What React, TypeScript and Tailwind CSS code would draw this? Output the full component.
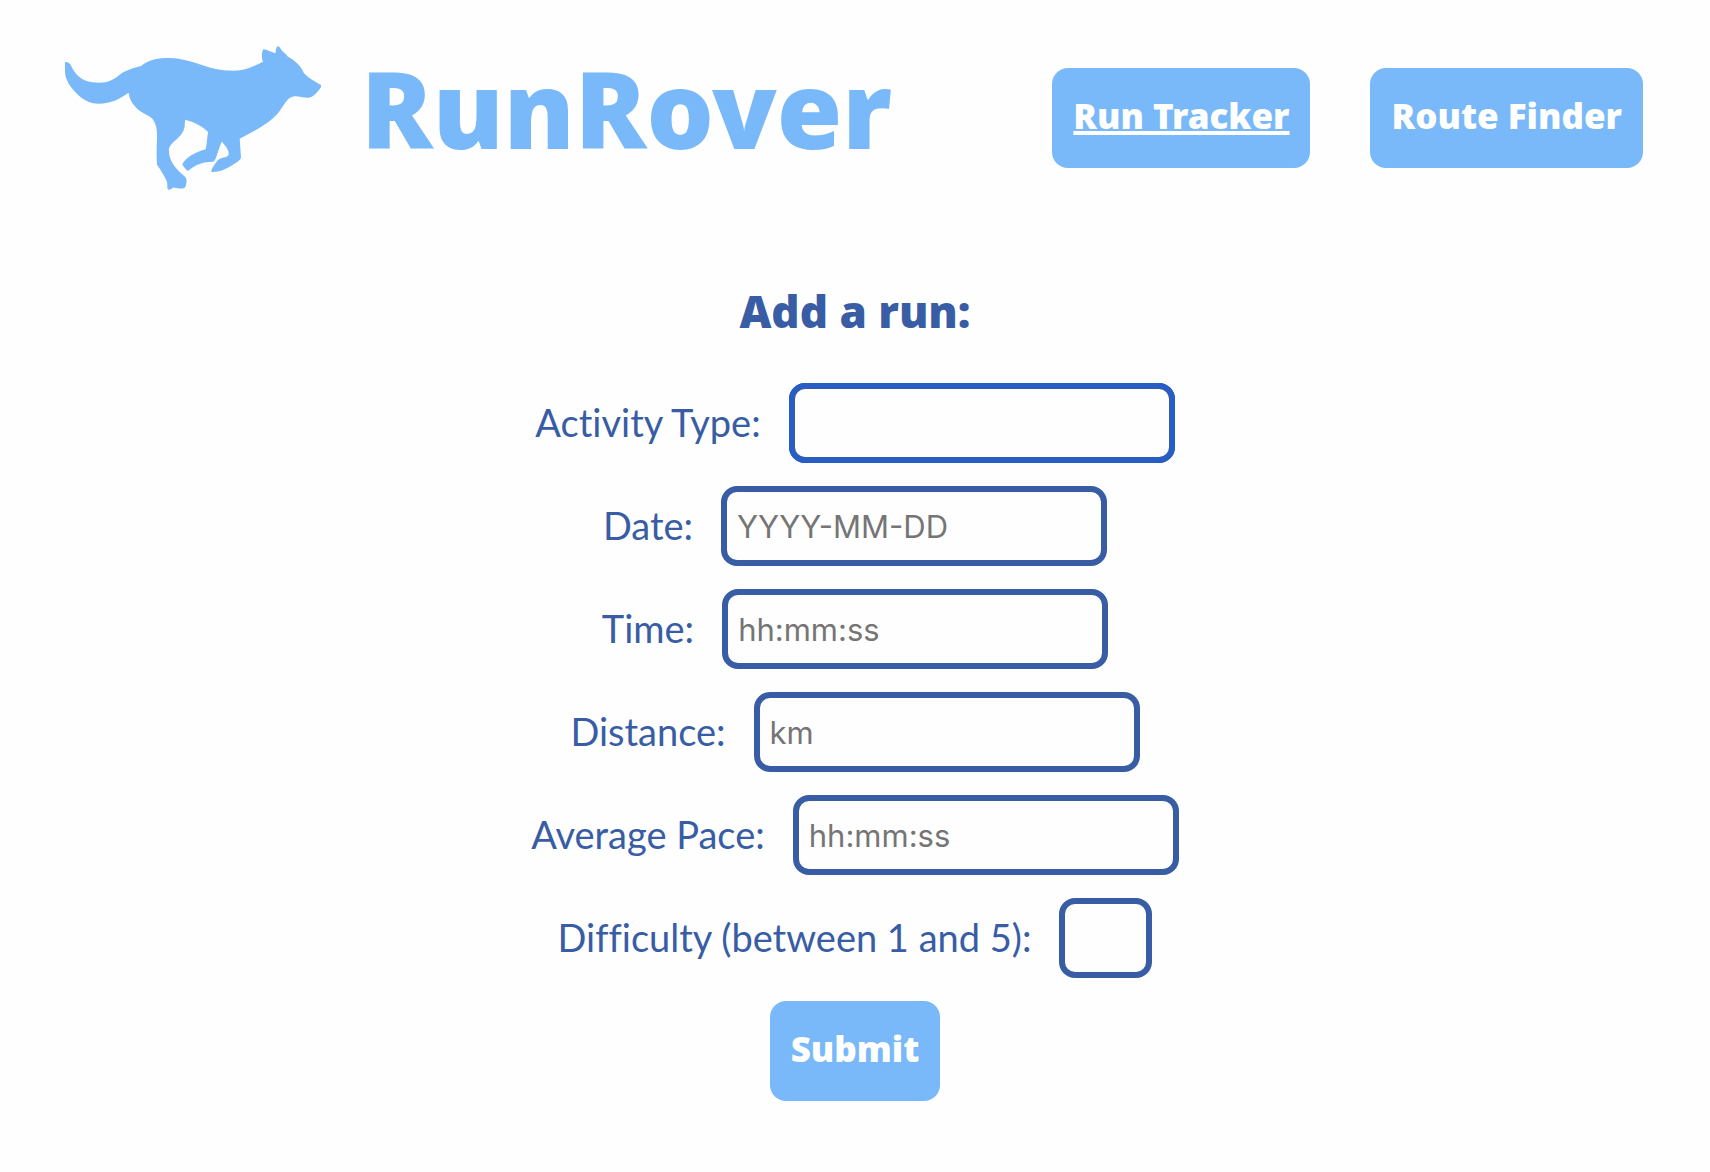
type Field = {
  id: string;
  label: string;
  placeholder?: string;
  small?: boolean;
  active?: boolean;
};

const fields: Field[] = [
  { id: "activity", label: "Activity Type:", active: true },
  { id: "date", label: "Date:", placeholder: "YYYY-MM-DD" },
  { id: "time", label: "Time:", placeholder: "hh:mm:ss" },
  { id: "distance", label: "Distance:", placeholder: "km" },
  { id: "pace", label: "Average Pace:", placeholder: "hh:mm:ss" },
  { id: "difficulty", label: "Difficulty (between 1 and 5):", small: true },
];

function DogLogo() {
  return (
    <svg viewBox="45 45 768 438" className="h-[146px] w-64 shrink-0" fill="#79b9f9" role="img" aria-label="Running dog">
      <path d="M45 97 C51 94 57 98 62 105 C78 139 98 158 145 158 C176 158 192 148 209 134 C231 118 250 115 273 108 C298 88 325 84 358 84 C398 85 430 96 467 109 C500 120 525 122 550 122 C588 122 608 110 639 95 C634 84 634 70 640 58 C652 59 664 67 677 70 C677 62 678 53 683 48 C689 49 692 57 696 62 C703 68 709 73 714 80 C736 91 755 110 762 130 C776 145 795 155 813 165 L813 171 C803 187 790 201 776 203 C760 204 747 198 733 199 C711 202 703 225 689 243 C660 281 616 301 569 326 L573 382 C571 392 562 396 552 402 C530 416 509 427 484 426 C483 418 489 411 495 402 C502 392 506 387 513 385 C521 382 529 382 534 377 C539 370 534 360 529 352 C525 345 519 339 515 335 C509 348 506 361 501 374 C498 383 495 394 488 395 C472 395 455 398 439 406 C428 411 420 419 413 423 C406 417 401 411 397 403 C406 384 433 367 467 358 C471 341 471 325 474 306 C456 287 432 276 406 269 C403 279 406 288 401 301 C391 325 366 334 357 355 C354 388 374 415 402 437 C409 443 411 449 409 459 C408 470 405 474 401 475 C391 477 381 473 373 473 C368 470 366 480 357 479 C350 480 353 468 351 456 C344 438 332 420 321 404 C319 375 320 350 321 323 C322 298 318 275 302 262 C286 251 268 246 254 228 C243 216 238 203 236 188 C212 205 184 221 145 221 C103 220 80 192 60 167 C48 148 45 136 45 120 Z" />
    </svg>
  );
}

const buttonClass =
  "flex h-[100px] items-center justify-center rounded-2xl bg-[#79b9f9] px-[21px] pb-[6px] text-[35px] leading-none font-black whitespace-nowrap text-white font-['Noto_Sans',sans-serif]";

export default function App() {
  return (
    <div className="min-h-screen bg-[#fefefe] pb-16 text-[#385da5]">
      <header className="flex items-center justify-between pt-[45px] pr-[67px] pl-[65px]">
        <div className="flex items-center gap-10">
          <DogLogo />
          <h1 className="pb-5 text-[106px] leading-none font-black text-[#79b9f9] font-['Noto_Sans',sans-serif]">
            RunRover
          </h1>
        </div>
        <nav className="flex gap-15">
          <a href="#tracker" className={buttonClass + " underline decoration-4 underline-offset-2"}>
            Run Tracker
          </a>
          <a href="#finder" className={buttonClass}>
            Route Finder
          </a>
        </nav>
      </header>

      <main className="mt-[90px] flex flex-col items-center">
        <h2 className="text-[44px] leading-[60px] font-black font-['Noto_Sans',sans-serif]">Add a run:</h2>
        <form className="mt-[42px] flex flex-col items-center gap-[23px]" onSubmit={(e) => e.preventDefault()}>
          {fields.map((f) => (
            <div key={f.id} className="flex items-center gap-7">
              <label
                htmlFor={f.id}
                className="pb-[3px] text-[38px] leading-[48px] whitespace-nowrap [font-variant-ligatures:none] font-['Lato',sans-serif]"
              >
                {f.label}
              </label>
              <input
                id={f.id}
                type="text"
                placeholder={f.placeholder}
                className={
                  "h-20 rounded-2xl border-6 border-[#385da5] bg-transparent px-[10px] text-[31px] font-['Inter',sans-serif] placeholder:text-[#757575] " +
                  (f.small ? "w-[93px] " : "w-[386px] ") +
                  (f.active ? "outline-5 -outline-offset-5 outline-[#265dc6]" : "outline-none")
                }
              />
            </div>
          ))}
          <button type="submit" className={buttonClass}>
            Submit
          </button>
        </form>
      </main>
    </div>
  );
}
